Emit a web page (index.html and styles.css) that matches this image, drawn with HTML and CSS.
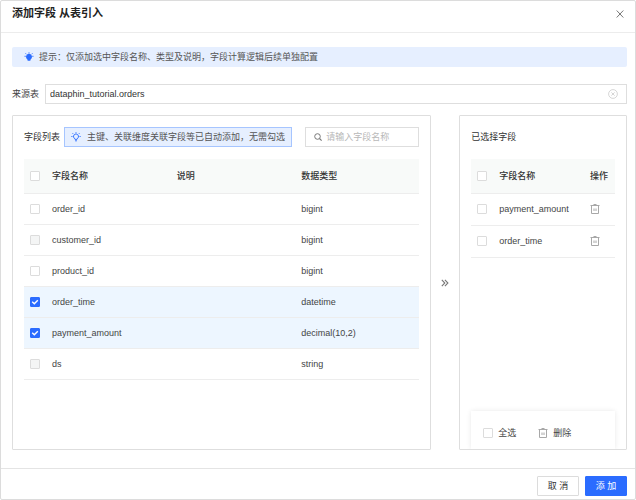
FILE: index.html
```html
<!DOCTYPE html>
<html lang="zh-CN">
<head>
<meta charset="utf-8">
<meta name="viewport" content="width=device-width, initial-scale=1">
<title>添加字段 从表引入</title>
<link rel="stylesheet" href="styles.css">
</head>
<body>
<svg class="sprite" aria-hidden="true">
  <symbol id="trash" viewBox="0 0 10 10">
    <path d="M0.5 1.5H9.5M3.5 0.5H6.5M1.5 2V9.5H8.5V2M4 4.5V7M6 4.5V7" fill="none" stroke="currentColor" stroke-width="1"/>
  </symbol>
</svg>
<div class="dialog" role="dialog" aria-labelledby="title">
  <header class="dialog-header">
    <h1 id="title">添加字段 从表引入</h1>
    <button class="icon-button" type="button" aria-label="关闭">
      <svg class="close-icon" viewBox="0 0 8 8"><path d="M0.7 0.5L7.3 7.5M7.3 0.5L0.7 7.5" fill="none" stroke="currentColor" stroke-width="1"/></svg>
    </button>
  </header>

  <main class="dialog-body">
    <p class="tip">
      <svg class="bulb" viewBox="0 0 10 10"><path d="M3.4 7.4A3 3 0 1 1 6.6 7.4L6.3 8.8H3.7Z" fill="currentColor"/><path d="M5 0.3V1.5M0.5 4.3H1.8M8.2 4.3H9.5M1.5 1.3L2.5 2.3M8.5 1.3L7.5 2.3" fill="none" stroke="currentColor" stroke-width="0.9"/></svg>
      提示：仅添加选中字段名称、类型及说明，字段计算逻辑后续单独配置
    </p>

    <div class="source">
      <label for="source">来源表</label>
      <div class="field">
        <input id="source" type="text" value="dataphin_tutorial.orders">
        <button class="icon-button clear" type="button" aria-label="清空">
          <svg class="clear-icon" viewBox="0 0 10 10"><circle cx="5" cy="5" r="4.4" fill="none" stroke="currentColor" stroke-width="0.8"/><path d="M3.4 3.4L6.6 6.6M6.6 3.4L3.4 6.6" stroke="currentColor" stroke-width="0.8"/></svg>
        </button>
      </div>
    </div>

    <div class="transfer">
      <section class="panel">
        <div class="panel-head">
          <h2>字段列表</h2>
          <p class="hint">
            <svg class="bulb" viewBox="0 0 10 10"><path d="M4 7.4V6.8A2.5 2.5 0 1 1 6 6.8V7.4ZM4 8.8H6M5 0.2V1.3M0.3 4.5H1.5M8.5 4.5H9.7M1.5 1.2L2.4 2.1M8.5 1.2L7.6 2.1" fill="none" stroke="currentColor" stroke-width="0.9"/></svg>
            主键、关联维度关联字段等已自动添加，无需勾选
          </p>
          <div class="field search">
            <svg class="search-icon" viewBox="0 0 8 8"><circle cx="3.5" cy="3.5" r="2.8" fill="none" stroke="currentColor" stroke-width="1"/><path d="M5.5 5.5L7.6 7.6" stroke="currentColor" stroke-width="1.1"/></svg>
            <input type="text" placeholder="请输入字段名称" aria-label="请输入字段名称">
          </div>
        </div>
        <table class="fields">
          <thead>
            <tr><th class="check"><input type="checkbox" aria-label="全选字段"></th><th>字段名称</th><th>说明</th><th class="type">数据类型</th></tr>
          </thead>
          <tbody>
            <tr><td><input type="checkbox" id="f1"></td><td><label for="f1">order_id</label></td><td></td><td>bigint</td></tr>
            <tr><td><input type="checkbox" id="f2" disabled></td><td><label for="f2">customer_id</label></td><td></td><td>bigint</td></tr>
            <tr><td><input type="checkbox" id="f3"></td><td><label for="f3">product_id</label></td><td></td><td>bigint</td></tr>
            <tr class="selected"><td><input type="checkbox" id="f4" checked></td><td><label for="f4">order_time</label></td><td></td><td>datetime</td></tr>
            <tr class="selected"><td><input type="checkbox" id="f5" checked></td><td><label for="f5">payment_amount</label></td><td></td><td>decimal(10,2)</td></tr>
            <tr><td><input type="checkbox" id="f6" disabled></td><td><label for="f6">ds</label></td><td></td><td>string</td></tr>
          </tbody>
        </table>
      </section>

      <svg class="arrows" viewBox="0 0 8 8" aria-hidden="true"><path d="M0.8 0.8L3.8 4L0.8 7.2M3.9 0.8L6.9 4L3.9 7.2" fill="none" stroke="currentColor" stroke-width="1.1"/></svg>

      <section class="panel">
        <div class="panel-head">
          <h2>已选择字段</h2>
        </div>
        <table class="picked">
          <thead>
            <tr><th class="check"><input type="checkbox" aria-label="全选已选择字段"></th><th>字段名称</th><th class="action">操作</th></tr>
          </thead>
          <tbody>
            <tr><td><input type="checkbox" id="p1"></td><td><label for="p1">payment_amount</label></td><td><button class="icon-button" type="button" aria-label="删除 payment_amount"><svg class="trash-icon"><use href="#trash"/></svg></button></td></tr>
            <tr><td><input type="checkbox" id="p2"></td><td><label for="p2">order_time</label></td><td><button class="icon-button" type="button" aria-label="删除 order_time"><svg class="trash-icon"><use href="#trash"/></svg></button></td></tr>
          </tbody>
        </table>
        <div class="bulk">
          <label class="bulk-item"><input type="checkbox">全选</label>
          <button class="icon-button bulk-item" type="button"><svg class="trash-icon"><use href="#trash"/></svg>删除</button>
        </div>
      </section>
    </div>
  </main>

  <footer class="dialog-footer">
    <button class="button" type="button">取 消</button>
    <button class="button primary" type="button">添 加</button>
  </footer>
</div>
</body>
</html>
```

FILE: styles.css
```css
* {
  box-sizing: border-box;
}

body {
  margin: 0;
  background: #fff;
  color: #444;
  font: 9px/14px "Liberation Sans", "Noto Sans CJK SC", sans-serif;
}

h1, h2, p {
  margin: 0;
}

input, button {
  font: inherit;
  color: inherit;
}

svg {
  display: block;
  flex: none;
}

.sprite {
  position: absolute;
  width: 0;
  height: 0;
}

.dialog {
  display: flex;
  flex-direction: column;
  min-height: 100vh;
  border: 1px solid #dcdcdc;
  border-radius: 2px;
}

.dialog-header {
  display: flex;
  align-items: center;
  justify-content: space-between;
  padding: 4px 11px 10px;
  border-bottom: 1px solid #ececec;
}

h1 {
  color: #222;
  font-size: 11px;
  font-weight: 600;
  line-height: 17px;
}

.icon-button {
  display: flex;
  align-items: center;
  padding: 0;
  border: 0;
  background: none;
}

.dialog-header .icon-button {
  color: #777;
}

.close-icon,
.search-icon,
.arrows {
  width: 8px;
  height: 8px;
}

.dialog-body {
  display: flex;
  flex: 1;
  flex-direction: column;
  padding: 14px 8px 18px 11px;
}

.tip {
  display: flex;
  align-items: center;
  gap: 5px;
  height: 20px;
  padding: 0 12px;
  border-radius: 2px;
  background: #e6efff;
  color: #555;
}

.bulb {
  width: 10px;
  height: 10px;
  color: #2b6cff;
}

.source {
  display: flex;
  align-items: center;
  gap: 6px;
  margin: 17px 0 11px;
}

.field {
  display: flex;
  flex: 1;
  align-items: center;
  min-width: 0;
  height: 20px;
  border: 1px solid #dedede;
}

.field input {
  flex: 1;
  min-width: 0;
  padding: 0 4px;
  border: 0;
  outline: 0;
  background: none;
  color: #333;
}

.field input::placeholder {
  color: #b8b8b8;
}

.clear {
  padding-right: 8px;
  color: #ccc;
}

.clear-icon {
  width: 10px;
  height: 10px;
}

.transfer {
  display: grid;
  flex: 1;
  grid-template-columns: minmax(0, 5fr) auto minmax(0, 2fr);
  gap: 10px;
}

.panel {
  display: flex;
  flex-direction: column;
  padding: 11px 11px 0;
  border: 1px solid #dedede;
  border-radius: 1px;
}

.arrows {
  align-self: center;
  color: #777;
}

.panel-head {
  display: flex;
  align-items: center;
  gap: 4px;
  height: 20px;
  margin-bottom: 12px;
}

h2 {
  color: #333;
  font-size: 9px;
  font-weight: 400;
  white-space: nowrap;
}

.hint {
  display: flex;
  align-items: center;
  gap: 6px;
  height: 20px;
  padding: 0 6px;
  border: 1px solid #a6c5ff;
  background: #e6efff;
  color: #555;
  white-space: nowrap;
}

.search {
  flex: none;
  width: 114px;
  margin-left: auto;
  padding-left: 8px;
}

.search-icon {
  color: #777;
}

table {
  width: 100%;
  border-collapse: collapse;
  table-layout: fixed;
}

th, td {
  height: 31px;
  padding: 0;
  border-bottom: 1px solid #ededed;
  text-align: left;
}

th {
  height: 34px;
  background: #f8faf9;
  color: #333;
  font-weight: 500;
}

.picked td {
  height: 32px;
}

.check {
  width: 28px;
}

.type {
  width: 118px;
}

.action {
  width: 25px;
}

.selected {
  background: #edf6ff;
}

input[type="checkbox"] {
  display: block;
  flex: none;
  width: 10px;
  height: 10px;
  margin: 0 6px;
  border: 1px solid #dcdcdc;
  border-radius: 1px;
  background: #fff;
  appearance: none;
}

input[type="checkbox"]:disabled {
  background: #f4f5f5;
}

input[type="checkbox"]:checked {
  border-color: #2b6cff;
  background: #2b6cff;
}

input[type="checkbox"]:checked::after {
  display: block;
  width: 8px;
  height: 8px;
  background: url("data:image/svg+xml,%3Csvg xmlns='http://www.w3.org/2000/svg' viewBox='0 0 8 8'%3E%3Cpath d='M1.2 3.8L3.3 5.8L6.8 2.2' fill='none' stroke='white' stroke-width='1.4'/%3E%3C/svg%3E");
  content: "";
}

.trash-icon {
  width: 10px;
  height: 10px;
  color: #a8a8a8;
}

.bulk {
  display: flex;
  align-items: center;
  gap: 22px;
  height: 38px;
  margin-top: auto;
  padding: 6px 6px 0;
  box-shadow: 0 0 5px #e8e8e8;
  clip-path: inset(-6px -6px 0);
}

.bulk-item {
  display: flex;
  align-items: center;
  gap: 5px;
}

.bulk-item input[type="checkbox"] {
  margin-right: 0;
}

.dialog-footer {
  display: flex;
  justify-content: flex-end;
  gap: 6px;
  padding: 7px 8px 3px;
  border-top: 1px solid #e4e4e4;
}

.button {
  width: 42px;
  height: 20px;
  padding: 0;
  border: 1px solid #dcdcdc;
  border-radius: 1px;
  background: #fff;
  color: #333;
}

.primary {
  border-color: #2b6cff;
  background: #2b6cff;
  color: #fff;
}
```
